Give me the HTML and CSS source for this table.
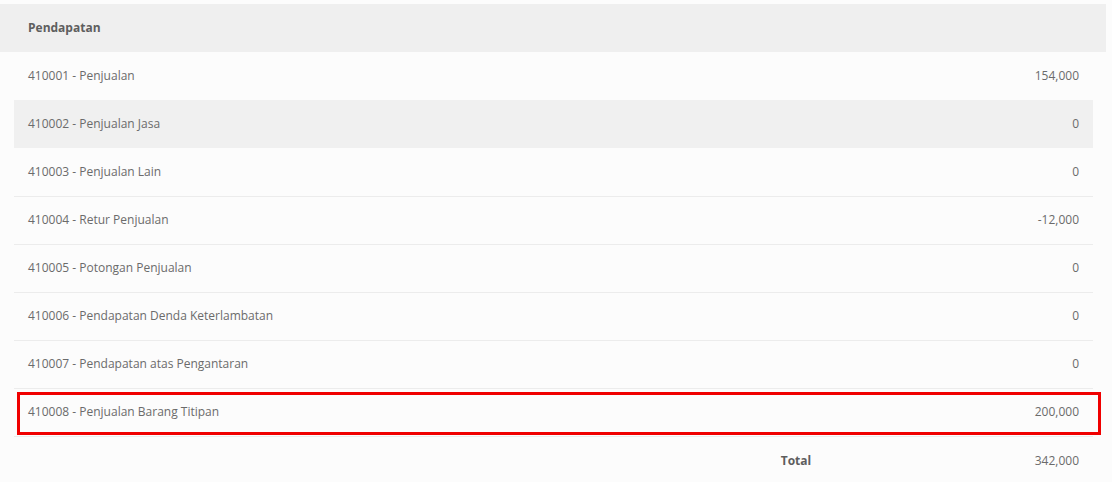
FILE: index.html
```html
<!DOCTYPE html>
<html>
<head>
<meta charset="utf-8">
<link rel="stylesheet" href="styles.css">
</head>
<body>
<div class="page">
  <div class="head">Pendapatan</div>
  <div class="table">
    <div class="row first"><span class="acc">410001 - Penjualan</span><span class="amt">154,000</span></div>
    <div class="row striped"><span class="acc">410002 - Penjualan Jasa</span><span class="amt">0</span></div>
    <div class="row"><span class="acc">410003 - Penjualan Lain</span><span class="amt">0</span></div>
    <div class="row"><span class="acc">410004 - Retur Penjualan</span><span class="amt">-12,000</span></div>
    <div class="row"><span class="acc">410005 - Potongan Penjualan</span><span class="amt">0</span></div>
    <div class="row"><span class="acc">410006 - Pendapatan Denda Keterlambatan</span><span class="amt">0</span></div>
    <div class="row"><span class="acc">410007 - Pendapatan atas Pengantaran</span><span class="amt">0</span></div>
    <div class="row"><span class="acc">410008 - Penjualan Barang Titipan</span><span class="amt">200,000</span></div>
    <div class="row total"><span class="acc"></span><span class="tlabel">Total</span><span class="amt">342,000</span></div>
  </div>
  <div class="highlight"></div>
</div>
</body>
</html>
```

FILE: styles.css
```css
html, body {
  margin: 0;
  padding: 0;
  background: #fcfcfc;
}
body {
  font-family: "Open Sans", "Noto Sans", sans-serif;
  font-size: 12px;
  color: #6b6b6b;
}
.page {
  position: relative;
  padding-top: 4px;
}
.head {
  box-sizing: border-box;
  width: 1106px;
  height: 48px;
  background: #efefef;
  padding: 0 0 2px 28px;
  display: flex;
  align-items: center;
  font-weight: 700;
  color: #5e5e5e;
}
.table {
  margin: 0 19px 0 14px;
}
.row {
  box-sizing: border-box;
  height: 48px;
  border-top: 1px solid #ececec;
  display: flex;
  align-items: center;
  padding: 0 14px 2px;
}
.row.first {
  border-top: none;
}
.row.striped {
  background: #f0f0f0;
  border-top: none;
}
.row.striped + .row {
  border-top-color: transparent;
}
.row:nth-child(9) {
  height: 49px;
}
.acc {
  flex: 1;
}
.amt {
  text-align: right;
}
.tlabel {
  font-weight: 700;
  color: #5e5e5e;
  width: 254px;
}
.highlight {
  position: absolute;
  left: 17px;
  top: 392px;
  width: 1084px;
  height: 43px;
  box-sizing: border-box;
  border: 3px solid #f00000;
}
```
